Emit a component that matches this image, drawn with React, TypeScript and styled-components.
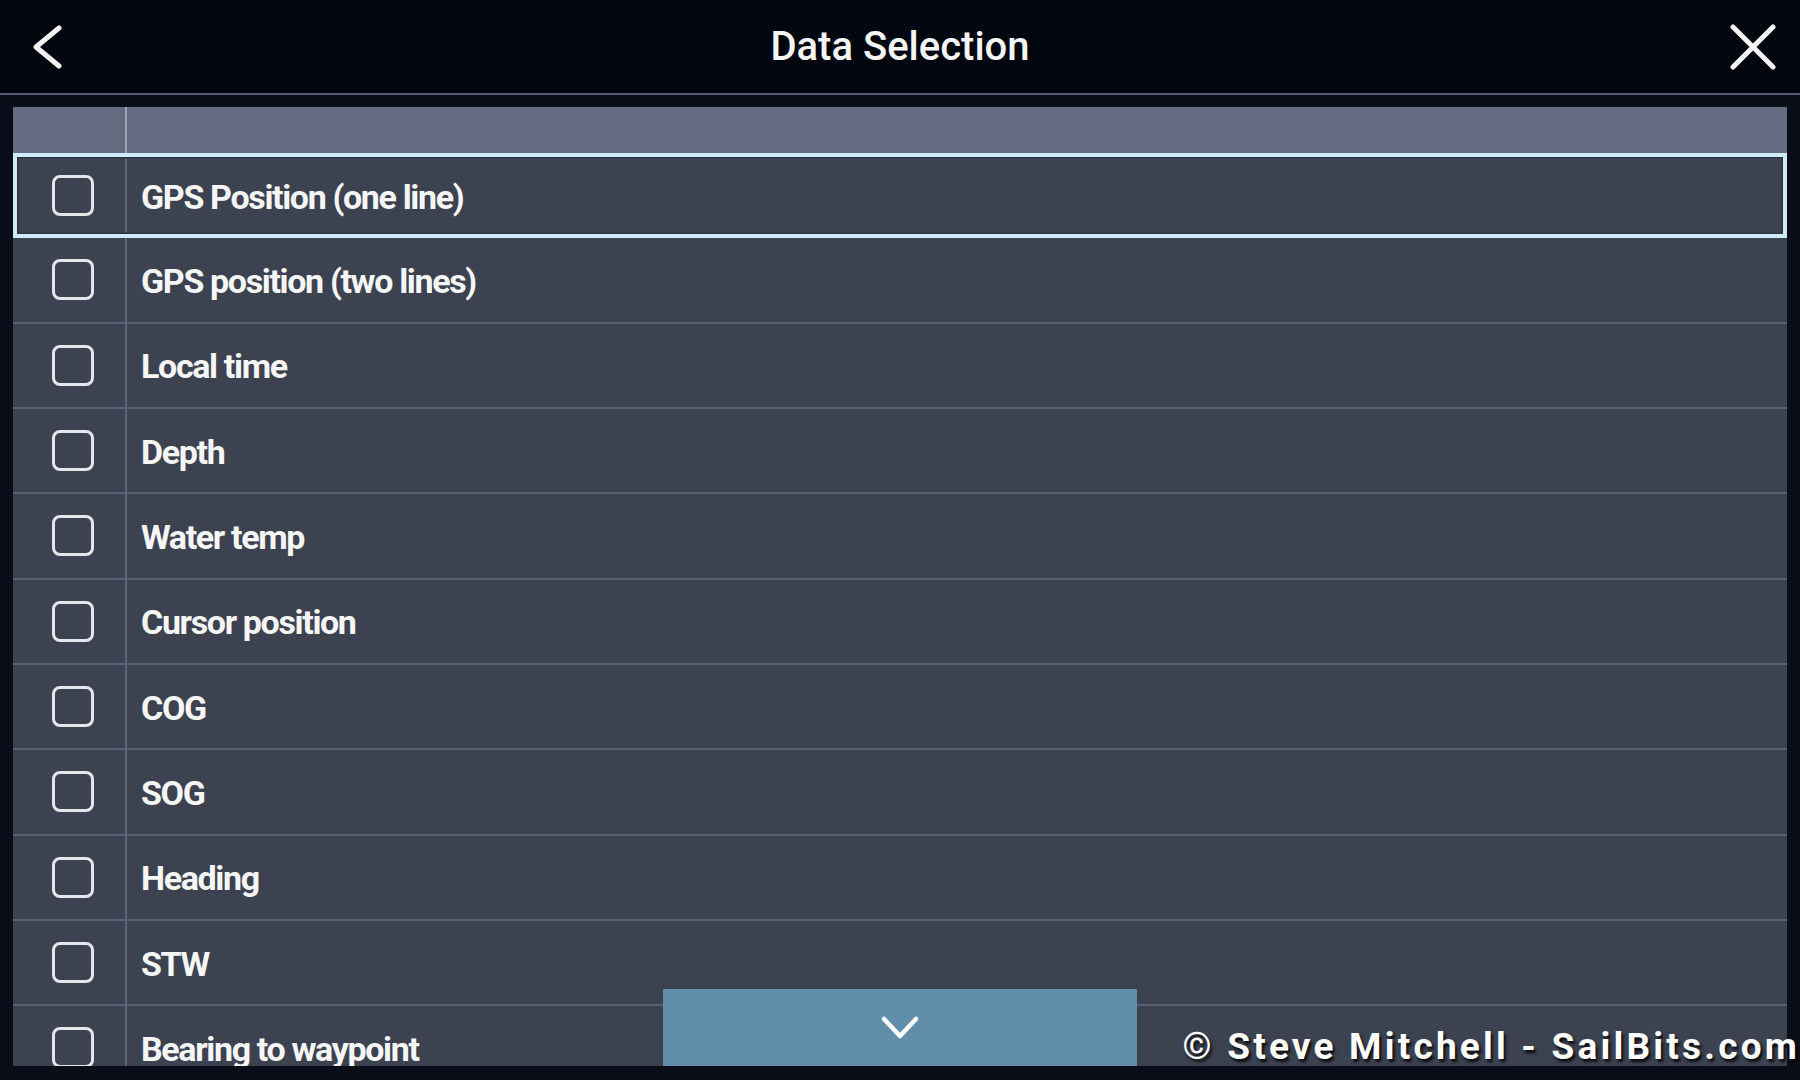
import React from "react";
import styled, { createGlobalStyle } from "styled-components";

const GlobalStyle = createGlobalStyle`
  html, body {
    margin: 0;
    padding: 0;
    background: #050912;
  }
  * { box-sizing: border-box; }
`;

const Screen = styled.div`
  width: 1800px;
  height: 1080px;
  display: flex;
  flex-direction: column;
  background: #0a0e18;
  position: relative;
  overflow: hidden;
  font-family: Roboto, "Noto Sans", sans-serif;
`;

const Header = styled.header`
  height: 95px;
  flex: 0 0 95px;
  display: grid;
  grid-template-columns: 120px 1fr 120px;
  align-items: center;
  background: #02060e;
  border-bottom: 2px solid #585e76;
`;

const IconButton = styled.button<{ $align: "start" | "end" }>`
  background: none;
  border: none;
  padding: 0;
  margin: 0;
  display: flex;
  justify-content: ${(p) => (p.$align === "start" ? "flex-start" : "flex-end")};
  padding-left: ${(p) => (p.$align === "start" ? "33px" : "0")};
  padding-right: ${(p) => (p.$align === "end" ? "24px" : "0")};
  height: 93px;
  align-items: center;
  cursor: pointer;
`;

const Title = styled.h1`
  margin: 0;
  text-align: center;
  color: #f5f5f5;
  font-family: Roboto, "Noto Sans", sans-serif;
  font-weight: 500;
  font-size: 40px;
  letter-spacing: 0px;
  line-height: 93px;
`;

const Content = styled.main`
  flex: 1;
  padding: 12px 13px 14px 13px;
  display: flex;
  min-height: 0;
`;

const Table = styled.div`
  flex: 1;
  position: relative;
  overflow: hidden;
  background: #3c4250;
  display: flex;
  flex-direction: column;
`;

const HeadRow = styled.div`
  height: 46px;
  flex: 0 0 46px;
  display: grid;
  grid-template-columns: 114px 1fr;
  background: #656c81;
`;

const HeadCell = styled.div<{ $divider?: boolean }>`
  border-right: ${(p) => (p.$divider ? "2px solid #9ca2b3" : "none")};
`;

const Row = styled.div<{ $selected?: boolean }>`
  height: 85.33px;
  flex: 0 0 85.33px;
  display: grid;
  grid-template-columns: 114px 1fr;
  position: relative;
  background: #3c4250;
  border-bottom: ${(p) => (p.$selected ? "none" : "2px solid #596077")};
  ${(p) =>
    p.$selected
      ? `
    &::after {
      content: "";
      position: absolute;
      inset: 0;
      border: 4px solid #cfeaf8;
      box-shadow: inset 0 0 0 1.5px #2e333e;
      pointer-events: none;
    }
  `
      : ""}
`;

const CheckCell = styled.div`
  display: flex;
  align-items: center;
  padding-left: 39px;
  border-right: 2px solid #5d6479;
`;

const Checkbox = styled.span`
  width: 42px;
  height: 41px;
  border: 3px solid #e4e6ea;
  border-radius: 8px;
  display: block;
`;

const LabelCell = styled.div`
  display: flex;
  align-items: center;
  padding-left: 14px;
  padding-top: 2px;
  color: #f6f6f6;
  font-family: Roboto, "Noto Sans", sans-serif;
  font-weight: 700;
  font-size: 34px;
  letter-spacing: -1.35px;
  white-space: nowrap;
`;

const ScrollButton = styled.button`
  position: absolute;
  left: 50%;
  bottom: 0;
  transform: translateX(-50%);
  width: 474px;
  height: 77px;
  border: none;
  background: rgba(98, 146, 174, 0.96);
  display: flex;
  align-items: center;
  justify-content: center;
  padding: 0;
  cursor: pointer;
`;

const Watermark = styled.div`
  position: absolute;
  right: 0;
  bottom: 12px;
  color: #ffffff;
  font-family: Roboto, "Noto Sans", sans-serif;
  font-weight: 700;
  font-size: 37px;
  letter-spacing: 3.2px;
  white-space: nowrap;
  text-shadow: 2px 3px 3px rgba(0, 0, 0, 0.85);
  pointer-events: none;
`;

const items = [
  "GPS Position (one line)",
  "GPS position (two lines)",
  "Local time",
  "Depth",
  "Water temp",
  "Cursor position",
  "COG",
  "SOG",
  "Heading",
  "STW",
  "Bearing to waypoint",
];

export default function App() {
  return (
    <>
      <GlobalStyle />
      <Screen>
        <Header>
          <IconButton $align="start" aria-label="Back">
            <svg width="30" height="44" viewBox="0 0 30 44">
              <polyline
                points="26,3 3,22 26,41"
                fill="none"
                stroke="#f4f4f4"
                strokeWidth="5"
                strokeLinecap="round"
                strokeLinejoin="round"
              />
            </svg>
          </IconButton>
          <Title>Data Selection</Title>
          <IconButton $align="end" aria-label="Close">
            <svg width="46" height="46" viewBox="0 0 46 46">
              <path
                d="M3 3 L43 43 M43 3 L3 43"
                fill="none"
                stroke="#f4f4f4"
                strokeWidth="5"
                strokeLinecap="round"
              />
            </svg>
          </IconButton>
        </Header>
        <Content>
          <Table>
            <HeadRow>
              <HeadCell $divider />
              <HeadCell />
            </HeadRow>
            {items.map((label, i) => (
              <Row key={label} $selected={i === 0}>
                <CheckCell>
                  <Checkbox />
                </CheckCell>
                <LabelCell>{label}</LabelCell>
              </Row>
            ))}
            <ScrollButton aria-label="Scroll down">
              <svg width="38" height="24" viewBox="0 0 38 24">
                <polyline
                  points="3,3 19,20 35,3"
                  fill="none"
                  stroke="#ffffff"
                  strokeWidth="4.5"
                  strokeLinecap="round"
                  strokeLinejoin="round"
                />
              </svg>
            </ScrollButton>
          </Table>
        </Content>
        <Watermark>© Steve Mitchell - SailBits.com</Watermark>
      </Screen>
    </>
  );
}
